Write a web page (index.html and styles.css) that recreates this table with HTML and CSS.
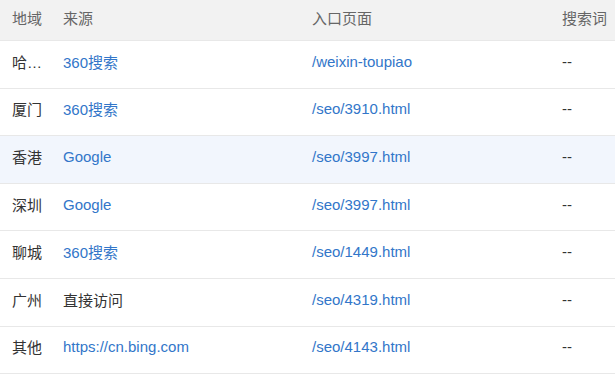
FILE: index.html
```html
<!DOCTYPE html>
<html lang="zh-CN">
<head>
    <meta charset="UTF-8">
    <title>来源明细</title>
    <link rel="stylesheet" href="styles.css">
</head>
<body>
    <table class="visit-table">
        <colgroup>
            <col class="col-area">
            <col class="col-source">
            <col class="col-page">
            <col class="col-word">
        </colgroup>
        <thead>
            <tr>
                <th class="area">地域</th>
                <th>来源</th>
                <th>入口页面</th>
                <th class="word">搜索词</th>
            </tr>
        </thead>
        <tbody>
            <tr>
                <td class="area">哈尔滨</td>
                <td><a href="#">360搜索</a></td>
                <td><a href="#">/weixin-toupiao</a></td>
                <td class="word">--</td>
            </tr>
            <tr>
                <td class="area">厦门</td>
                <td><a href="#">360搜索</a></td>
                <td><a href="#">/seo/3910.html</a></td>
                <td class="word">--</td>
            </tr>
            <tr class="active">
                <td class="area">香港</td>
                <td><a href="#">Google</a></td>
                <td><a href="#">/seo/3997.html</a></td>
                <td class="word">--</td>
            </tr>
            <tr>
                <td class="area">深圳</td>
                <td><a href="#">Google</a></td>
                <td><a href="#">/seo/3997.html</a></td>
                <td class="word">--</td>
            </tr>
            <tr>
                <td class="area">聊城</td>
                <td><a href="#">360搜索</a></td>
                <td><a href="#">/seo/1449.html</a></td>
                <td class="word">--</td>
            </tr>
            <tr>
                <td class="area">广州</td>
                <td>直接访问</td>
                <td><a href="#">/seo/4319.html</a></td>
                <td class="word">--</td>
            </tr>
            <tr>
                <td class="area">其他</td>
                <td><a href="#">https://cn.bing.com</a></td>
                <td><a href="#">/seo/4143.html</a></td>
                <td class="word">--</td>
            </tr>
        </tbody>
    </table>
</body>
</html>
```

FILE: styles.css
```css
body {
    margin: 0;
    padding: 0;
    background: #fff;
    font-family: "Liberation Sans", "Noto Sans CJK SC", sans-serif;
    font-size: 15px;
    color: #333;
    overflow: hidden;
}

.visit-table {
    width: 615px;
    table-layout: fixed;
    border-collapse: collapse;
}

.col-area { width: 51px; }
.col-source { width: 249px; }
.col-page { width: 250px; }
.col-word { width: 65px; }

.visit-table th,
.visit-table td {
    padding: 0 12px 6px;
    text-align: left;
    white-space: nowrap;
    overflow: hidden;
    text-overflow: ellipsis;
    border-bottom: 1px solid #e8e8e8;
}

.visit-table .area {
    padding-right: 4px;
}

.visit-table .word {
    padding-right: 0;
}

.visit-table th {
    height: 34px;
    background: #f2f2f2;
    color: #666;
    font-weight: normal;
}

.visit-table td {
    height: 40.6px;
}

.visit-table tr.active td {
    background: #f2f6fd;
}

.visit-table a {
    color: #3276c9;
    text-decoration: none;
}
```
